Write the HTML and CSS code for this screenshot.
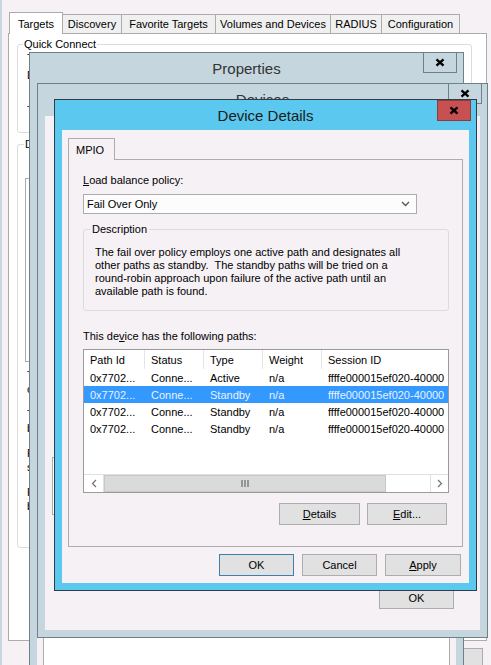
FILE: index.html
```html
<!DOCTYPE html>
<html lang="en">
<head>
    <meta charset="UTF-8">
    <title>Device Details</title>
    <link rel="stylesheet" href="styles.css">
</head>
<body>
<div class="screen">

    <!-- iSCSI Initiator Properties (back window, mostly covered) -->
    <div class="initiator">
        <div class="tabs">
            <div class="tab tab-on w-targets">Targets</div>
            <div class="tab w-discovery">Discovery</div>
            <div class="tab w-favorite">Favorite Targets</div>
            <div class="tab w-volumes">Volumes and Devices</div>
            <div class="tab w-radius">RADIUS</div>
            <div class="tab w-config">Configuration</div>
        </div>
        <div class="tab-panel">
            <fieldset class="group quick">
                <legend>Quick Connect</legend>
                <p class="frag f1">To</p>
                <p class="frag f2">DNS</p>
                <p class="frag f3">Target:</p>
            </fieldset>
            <fieldset class="group found">
                <legend><span class="found-legend">Discovered targets</span></legend>
                <div class="found-list"></div>
                <p class="frag-pair">To<br>click</p>
                <p class="frag-pair">To<br>button</p>
                <p class="frag-pair">For<br>select</p>
                <p class="frag-pair">For<br>button</p>
            </fieldset>
        </div>
        <div class="initiator-foot">
            <div class="btn">OK</div>
        </div>
    </div>

    <!-- Properties -->
    <div class="win win-back win-props">
        <div class="win-title">Properties</div>
        <div class="win-close"><svg width="10" height="9" viewBox="0 0 10 9"><path d="M1.5 1.3 L8.5 7.7 M8.5 1.3 L1.5 7.7" stroke="#000" stroke-width="2.3" fill="none"/></svg></div>
        <div class="client">
            <div class="props-box"></div>
        </div>
    </div>

    <!-- Devices -->
    <div class="win win-back win-devices">
        <div class="win-title">Devices</div>
        <div class="win-close"><svg width="10" height="9" viewBox="0 0 10 9"><path d="M1.5 1.3 L8.5 7.7 M8.5 1.3 L1.5 7.7" stroke="#000" stroke-width="2.3" fill="none"/></svg></div>
        <div class="client devices-client">
            <div class="volume-box"></div>
            <div class="devices-foot">
                <div class="btn">OK</div>
            </div>
        </div>
    </div>

    <!-- Device Details (active) -->
    <div class="win win-details">
        <div class="win-title">Device Details</div>
        <div class="win-close close-red"><svg width="10" height="9" viewBox="0 0 10 9"><path d="M1.5 1.3 L8.5 7.7 M8.5 1.3 L1.5 7.7" stroke="#000" stroke-width="2.3" fill="none"/></svg></div>
        <div class="client details-client">
            <div class="mpio-tabs">
                <div class="mpio-tab">MPIO</div>
            </div>
            <div class="mpio-panel">
                <div class="label"><u>L</u>oad balance policy:</div>
                <div class="combo">
                    <span>Fail Over Only</span>
                    <svg width="9" height="6" viewBox="0 0 9 6"><path d="M1 1 L4.5 4.5 L8 1" stroke="#555" stroke-width="1.3" fill="none"/></svg>
                </div>
                <fieldset class="group desc">
                    <legend>Description</legend>
                    <p class="desc-text">The fail over policy employs one active path and designates all<br>other paths as standby.&nbsp; The standby paths will be tried on a<br>round-robin approach upon failure of the active path until an<br>available path is found.</p>
                </fieldset>
                <div class="label paths-label">This de<u>v</u>ice has the following paths:</div>
                <div class="paths">
                    <div class="row head">
                        <div class="cell">Path Id</div>
                        <div class="cell">Status</div>
                        <div class="cell">Type</div>
                        <div class="cell">Weight</div>
                        <div class="cell">Session ID</div>
                    </div>
                    <div class="row">
                        <div class="cell">0x7702...</div>
                        <div class="cell">Conne...</div>
                        <div class="cell">Active</div>
                        <div class="cell">n/a</div>
                        <div class="cell">ffffe000015ef020-40000</div>
                    </div>
                    <div class="row row-sel">
                        <div class="cell">0x7702...</div>
                        <div class="cell">Conne...</div>
                        <div class="cell">Standby</div>
                        <div class="cell">n/a</div>
                        <div class="cell">ffffe000015ef020-40000</div>
                    </div>
                    <div class="row">
                        <div class="cell">0x7702...</div>
                        <div class="cell">Conne...</div>
                        <div class="cell">Standby</div>
                        <div class="cell">n/a</div>
                        <div class="cell">ffffe000015ef020-40000</div>
                    </div>
                    <div class="row">
                        <div class="cell">0x7702...</div>
                        <div class="cell">Conne...</div>
                        <div class="cell">Standby</div>
                        <div class="cell">n/a</div>
                        <div class="cell">ffffe000015ef020-40000</div>
                    </div>
                    <div class="paths-fill"></div>
                    <div class="hscroll">
                        <div class="sb-arrow"><svg width="6" height="9" viewBox="0 0 6 9"><path d="M5 1 L1.5 4.5 L5 8" stroke="#707070" stroke-width="1.2" fill="none"/></svg></div>
                        <div class="sb-thumb"><svg width="8" height="7" viewBox="0 0 8 7"><path d="M1 0 V7 M4 0 V7 M7 0 V7" stroke="#505050" stroke-width="1"/></svg></div>
                        <div class="sb-track"></div>
                        <div class="sb-arrow sb-right"><svg width="6" height="9" viewBox="0 0 6 9"><path d="M1 1 L4.5 4.5 L1 8" stroke="#707070" stroke-width="1.2" fill="none"/></svg></div>
                    </div>
                </div>
                <div class="path-buttons">
                    <div class="btn btn-details"><u>D</u>etails</div>
                    <div class="btn btn-edit"><u>E</u>dit...</div>
                </div>
            </div>
            <div class="dialog-buttons">
                <div class="btn btn-default">OK</div>
                <div class="btn">Cancel</div>
                <div class="btn btn-apply"><u>A</u>pply</div>
            </div>
        </div>
    </div>

</div>
</body>
</html>
```

FILE: styles.css
```css
/* screen and fonts */
body{
    margin: 0;
    background: #f5f1f5;
    font-family: "Liberation Sans", Arial, sans-serif;
    font-size: 11px;
    color: #000;
}
.screen{
    position: relative;
    width: 491px;
    height: 665px;
    overflow: hidden;
}
p{
    margin: 0;
}
u{
    text-decoration-thickness: 1px;
    text-underline-offset: 1px;
}

/* common push button */
.btn{
    box-sizing: border-box;
    width: 75px;
    height: 23px;
    border: 1px solid #adadad;
    background: #e1e1e1;
    display: flex;
    align-items: center;
    justify-content: center;
}
.btn-default{
    border-color: #3c7fb1;
}

/* group box */
.group{
    margin: 0;
    padding: 0 8px 0 9px;
    border: 1px solid #dcdcdc;
    border-radius: 3px;
    box-sizing: border-box;
}
.group legend{
    padding: 0 1px;
    line-height: 14px;
}

/* ---------- back window: iSCSI Initiator ---------- */
.initiator{
    height: 100%;
    box-sizing: border-box;
    border-left: 2px solid #c8d7df;
    padding: 12px 0 0 6px;
}
.tabs{
    display: flex;
    align-items: flex-end;
    height: 21px;
    margin-left: 1px;
}
.tab{
    box-sizing: border-box;
    height: 19px;
    margin-left: -1px;
    border: 1px solid #acacac;
    border-bottom: none;
    background: #f0f0f0;
    display: flex;
    align-items: center;
    justify-content: center;
}
.tabs .tab:first-child{
    margin-left: 0;
}
.tab-on{
    height: 22px;
    margin-bottom: -1px;
    background: #fff;
    position: relative;
    z-index: 1;
}
.w-targets{ width: 54px; }
.w-discovery{ width: 60px; }
.w-favorite{ width: 95px; }
.w-volumes{ width: 116px; }
.w-radius{ width: 52px; }
.w-config{ width: 79px; }

.tab-panel{
    box-sizing: border-box;
    width: 479px;
    height: 608px;
    border: 1px solid #acacac;
    background: #fff;
    padding-left: 8px;
}
.quick{
    width: 455px;
    margin-top: 3px;
    padding-bottom: 15px;
}
.quick legend{
    margin-left: -4px;
}
/* only the first letters of these lines show beside the Properties window */
.frag, .frag-pair{
    white-space: nowrap;
    line-height: 13px;
}
.f1{ margin-top: 1px; }
.f2{ margin-top: 4px; }
.f3{ margin-top: 22px; }

.found{
    width: 455px;
    height: 411px;
    margin-top: 4px;
    padding-left: 7px;
}
.found legend{
    margin-left: -1px;
}
.found-legend{
    display: block;
    width: 8px;
    overflow: hidden;
    white-space: nowrap;
}
.found-list{
    width: 300px;
    height: 184px;
    margin-top: 27px;
    border: 1px solid #aaa;
    box-sizing: border-box;
}
.frag-pair{
    padding-left: 2px;
    line-height: 14px;
    margin-top: 11px;
}
.found-list + .frag-pair{
    margin-top: 6px;
}
.initiator-foot{
    display: flex;
    justify-content: flex-end;
    margin-top: 7px;
    padding-right: 8px;
}

/* ---------- windows ---------- */
.win{
    position: absolute;
    box-sizing: border-box;
    border: 1px solid #6f8089;
    background: #c5d6de;
    padding: 0 7px 7px;
    display: flex;
    flex-direction: column;
}
.win-title{
    height: 30px;
    flex: none;
    display: flex;
    align-items: center;
    justify-content: center;
    font-size: 15px;
    color: #333;
}
.win-close{
    position: absolute;
    top: -1px;
    right: 5px;
    box-sizing: border-box;
    width: 34px;
    height: 21px;
    border: 1px solid #6f8089;
    background: #c5d6de;
    display: flex;
    align-items: center;
    justify-content: center;
}
.client{
    flex: 1;
    background: #f5f1f5;
    display: flex;
    flex-direction: column;
}

.win-props{
    left: 29px;
    top: 52px;
    width: 435px;
    height: 700px;
}
.win-props .win-title{
    padding-bottom: 2px;
}
.win-props .win-close{
    right: 6px;
}
.props-box{
    margin: 400px 6px 0;
    flex: 1;
    border: 1px solid #acacac;
    background: #fff;
}

.win-devices{
    left: 37px;
    top: 83px;
    width: 451px;
    height: 555px;
}
.win-devices .win-title{
    padding-bottom: 2px;
}
.volume-box{
    margin: 341px 0 0 7px;
    width: 400px;
    height: 58px;
    box-sizing: border-box;
    border: 1px solid #acacac;
    background: #fff;
}
.devices-foot{
    display: flex;
    justify-content: flex-end;
    margin-top: auto;
    padding: 0 26px 21px 0;
}

/* ---------- Device Details ---------- */
.win-details{
    left: 54px;
    top: 99px;
    width: 423px;
    height: 492px;
    border-color: #2f3d46;
    background: #5ac8ef;
}
.win-details .win-title{
    color: #1b1b1b;
}
.close-red{
    top: 0;
    background: #c75050;
    border-color: #8f3a3a;
}
.details-client{
    padding: 8px 7px 7px 6px;
}
.mpio-tabs{
    display: flex;
    height: 21px;
}
.mpio-tab{
    box-sizing: border-box;
    width: 47px;
    height: 22px;
    padding-left: 7px;
    border: 1px solid #adadad;
    border-bottom: none;
    background: #f5f1f5;
    display: flex;
    align-items: center;
    position: relative;
    z-index: 1;
}
.mpio-panel{
    box-sizing: border-box;
    width: 395px;
    height: 388px;
    border: 1px solid #adadad;
    padding: 13px 14px 0;
}
.label{
    line-height: 14px;
}
.combo{
    box-sizing: border-box;
    width: 334px;
    height: 20px;
    margin-top: 7px;
    border: 1px solid #acacac;
    background: #fcfcfc;
    display: flex;
    align-items: center;
    justify-content: space-between;
    padding: 0 6px 0 3px;
}
.desc{
    width: 366px;
    margin-top: 8px;
    padding: 0 11px 12px;
}
.desc legend{
    margin-left: -5px;
    padding: 0 2px;
}
.desc-text{
    margin-top: 10px;
    line-height: 13px;
    white-space: nowrap;
}
.paths-label{
    margin-top: 18px;
}
.paths{
    box-sizing: border-box;
    width: 366px;
    height: 144px;
    margin-top: 6px;
    border: 1px solid #9a9a9a;
    background: #fff;
    display: flex;
    flex-direction: column;
}
.row{
    display: grid;
    grid-template-columns: 61px 59px 59px 59px 1fr;
    height: 17px;
    align-items: center;
}
.row.head{
    height: 19px;
}
.head .cell{
    border-right: 1px solid #e5e5e5;
    height: 100%;
    box-sizing: border-box;
    display: flex;
    align-items: center;
}
.head .cell:last-child{
    border-right: none;
}
.cell{
    padding-left: 6px;
    white-space: nowrap;
    overflow: hidden;
}
.row-sel{
    background: #3399ff;
    color: #e8f1ff;
}
.paths-fill{
    flex: 1;
}
.hscroll{
    height: 18px;
    display: flex;
    border-top: 1px solid #e0e0e0;
    box-sizing: border-box;
}
.sb-arrow{
    width: 19px;
    display: flex;
    align-items: center;
    justify-content: center;
    border-right: 1px solid #e0e0e0;
}
.sb-right{
    width: 17px;
    border-right: none;
    border-left: 1px solid #e0e0e0;
}
.sb-thumb{
    width: 282px;
    box-sizing: border-box;
    background: #dadada;
    border: 1px solid #c8c8c8;
    display: flex;
    align-items: center;
    justify-content: center;
}
.sb-track{
    flex: 1;
}
.path-buttons{
    display: flex;
    justify-content: flex-end;
    gap: 7px;
    margin-top: 10px;
    padding-right: 1px;
}
.btn-details{
    width: 81px;
    height: 22px;
}
.btn-edit{
    width: 80px;
    height: 22px;
}
.dialog-buttons{
    display: flex;
    justify-content: flex-end;
    gap: 8px;
    margin-top: 7px;
    padding-right: 1px;
}
.dialog-buttons .btn{
    height: 22px;
}
.btn-apply{
    width: 76px;
}
```
